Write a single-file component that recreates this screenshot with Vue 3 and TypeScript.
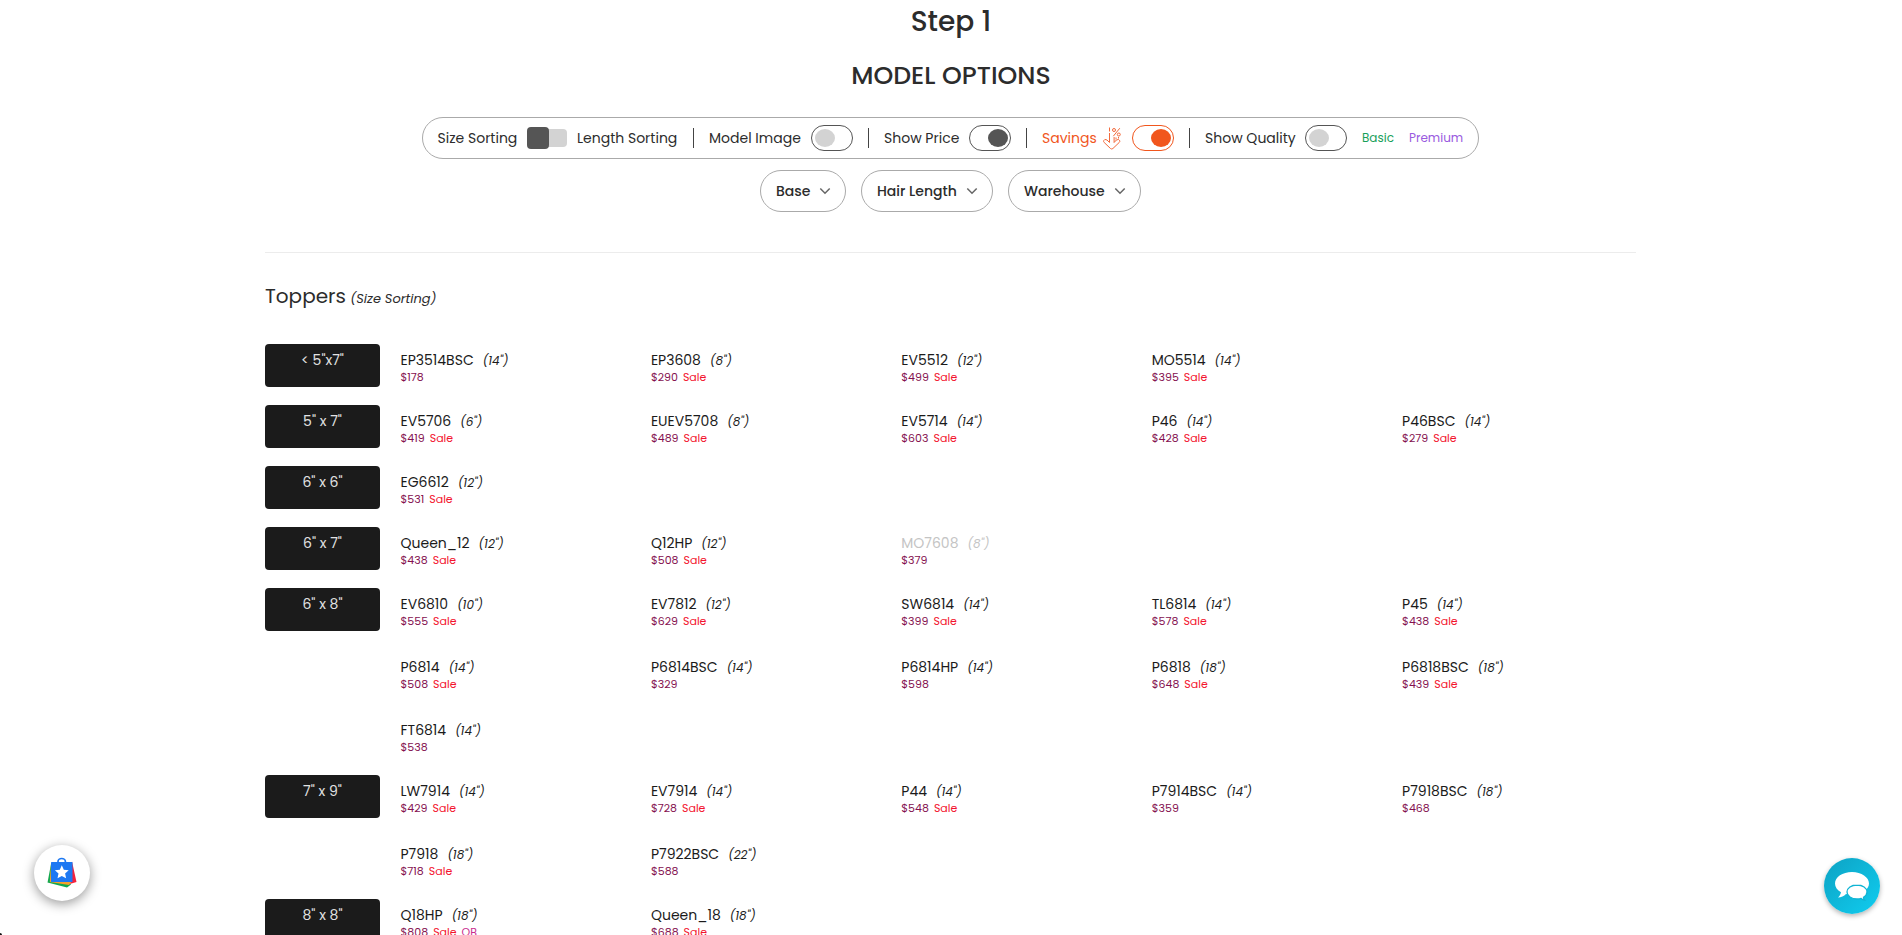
<script setup lang="ts">
interface Model {
  name: string
  length: number
  price: number
  sale?: boolean
  tag?: string
  muted?: boolean
}
interface Group {
  size: string
  models: Model[]
}

const m = (name: string, length: number, price: number, sale = true, extra: Partial<Model> = {}): Model => ({
  name, length, price, sale, ...extra,
})

const groups: Group[] = [
  { size: '< 5"x7"', models: [m('EP3514BSC', 14, 178, false), m('EP3608', 8, 290), m('EV5512', 12, 499), m('MO5514', 14, 395)] },
  { size: '5" x 7"', models: [m('EV5706', 6, 419), m('EUEV5708', 8, 489), m('EV5714', 14, 603), m('P46', 14, 428), m('P46BSC', 14, 279)] },
  { size: '6" x 6"', models: [m('EG6612', 12, 531)] },
  { size: '6" x 7"', models: [m('Queen_12', 12, 438), m('Q12HP', 12, 508), m('MO7608', 8, 379, false, { muted: true })] },
  {
    size: '6" x 8"',
    models: [
      m('EV6810', 10, 555), m('EV7812', 12, 629), m('SW6814', 14, 399), m('TL6814', 14, 578), m('P45', 14, 438),
      m('P6814', 14, 508), m('P6814BSC', 14, 329, false), m('P6814HP', 14, 598, false), m('P6818', 18, 648), m('P6818BSC', 18, 439),
      m('FT6814', 14, 538, false),
    ],
  },
  {
    size: '7" x 9"',
    models: [
      m('LW7914', 14, 429), m('EV7914', 14, 728), m('P44', 14, 548), m('P7914BSC', 14, 359, false), m('P7918BSC', 18, 468, false),
      m('P7918', 18, 718), m('P7922BSC', 22, 588, false),
    ],
  },
  { size: '8" x 8"', models: [m('Q18HP', 18, 808, true, { tag: 'OB' }), m('Queen_18', 18, 688)] },
]

const filters = [
  { label: 'Base', cls: 'base' },
  { label: 'Hair Length', cls: 'hair' },
  { label: 'Warehouse', cls: 'warehouse' },
]
</script>

<template>
  <main class="page">
    <h1 class="step">Step 1</h1>
    <h2 class="title">MODEL OPTIONS</h2>

    <div class="toolbar">
      <span class="label size">Size Sorting</span>
      <span class="slider"><i></i></span>
      <span class="label length">Length Sorting</span>
      <span class="bar"></span>
      <span class="label image">Model Image</span>
      <span class="toggle"><i></i></span>
      <span class="bar"></span>
      <span class="label price-label">Show Price</span>
      <span class="toggle on"><i></i></span>
      <span class="bar"></span>
      <span class="label savings">Savings</span>
      <svg class="drop" width="18" height="23" viewBox="0 0 18 23" fill="none" stroke="#f26a3c" stroke-width="1">
        <path d="M6.500 .5v4M6.500 6v9.500L4 13Q1.500 11.500.6 13.800q-.2.900.6 1.700l6.300 6q1.200 1 2.400 0l6.300-6q.8-.8.6-1.700-.9-2.300-3.400-.8l-2.300 2.500V10" stroke-linejoin="round" />
        <circle cx="11" cy="3" r="1.500" />
        <circle cx="15.800" cy="7.500" r="1.500" />
        <path d="M16.800 1.200l-6.500 8M13 10.500v2M15.500 10v1.500" />
      </svg>
      <span class="toggle on orange"><i></i></span>
      <span class="bar"></span>
      <span class="label quality">Show Quality</span>
      <span class="toggle"><i></i></span>
      <span class="grade basic">Basic</span>
      <span class="grade premium">Premium</span>
    </div>

    <div class="filters">
      <button v-for="f in filters" :key="f.label" class="filter" :class="f.cls">
        <span>{{ f.label }}</span>
        <svg width="12" height="8" viewBox="0 0 12 8" fill="none" stroke="#666" stroke-width="1.500"><path d="M1.300 1.400L6 6.200l4.700-4.800" /></svg>
      </button>
    </div>

    <section class="catalog">
      <h3 class="heading">Toppers <em>(Size Sorting)</em></h3>
      <div v-for="g in groups" :key="g.size" class="group">
        <div class="badge">{{ g.size }}</div>
        <div class="models">
          <div v-for="item in g.models" :key="item.name" class="model">
            <div class="name" :class="{ muted: item.muted }">{{ item.name }}<em>({{ item.length }}")</em></div>
            <div class="cost">${{ item.price }}<span v-if="item.sale" class="sale">Sale</span><span v-if="item.tag" class="tag">{{ item.tag }}</span></div>
          </div>
        </div>
      </div>
    </section>

    <div class="float rewards">
      <svg width="30" height="32" viewBox="0 0 30 32">
        <path d="M4 7L.5 25.500 20 30.500l4-3z" fill="#12a84e" />
        <path d="M25 4.500L29.500 25 21 27.500z" fill="#f5213c" />
        <path d="M4 7L2.800 25 22 28l3-4V7z" fill="#f7a02b" />
        <rect x="4" y="5" width="21.500" height="20" rx=".6" fill="#1d78f2" />
        <path d="M11 6V4.500a3.700 3 0 0 1 7.400 0V6" fill="none" stroke="#1d78f2" stroke-width="1.700" />
        <path d="M14.800 8.300l2 4.400 4.900.5-3.600 3.300 1 4.800-4.300-2.400-4.300 2.400 1-4.800-3.600-3.300 4.900-.5z" fill="#fff" />
      </svg>
    </div>
    <div class="float chat">
      <svg width="36" height="30" viewBox="0 0 36 30">
        <path d="M18 1C8.500 1 1 6.100 1 12.500c0 3.600 2.300 6.700 6 8.800-.4 2-1.500 3.900-3 5.300 3.200-.3 6-1.700 8-3.700 1.900.5 3.900.7 6 .7 9.500 0 17-4.900 17-11.100S27.500 1 18 1z" fill="#fff" />
        <path d="M23 14c-5.600 0-10 3.100-10 7s4.400 7 10 7c1.500 0 3-.2 4.200-.6 1 .9 2 1.400 3.300 1.600-.7-.8-1-1.600-1-2.800 2.200-1.300 3.500-3.200 3.500-5.200 0-3.900-4.400-7-10-7z" fill="#fff" stroke="#10b4d4" stroke-width="1.300" />
      </svg>
    </div>
    <div class="corner"></div>
  </main>
</template>

<style>
html, body { margin: 0; overflow: hidden; background: #fff; }
</style>

<style scoped>
.page {
  position: relative;
  box-sizing: border-box;
  height: 935px;
  overflow: hidden;
  font-family: Poppins, Inter, "Noto Sans", sans-serif;
  font-size: 14px;
  color: #2c2c2c;
  white-space: nowrap;
}
h1, h2, h3 { margin: 0; }
.step { height: 42px; padding-top: 1px; line-height: 42px; text-align: center; font-size: 28px; font-weight: 500; }
.title { height: 40px; margin: 13px 0 21px; line-height: 40px; text-align: center; font-size: 25.200px; font-weight: 500; }
.toolbar {
  display: flex;
  align-items: center;
  box-sizing: border-box;
  width: 1057px;
  height: 42px;
  margin: 0 auto 11px 422px;
  padding-left: 14.500px;
  border: 1px solid #aaa;
  border-radius: 21px;
}
.label { flex: none; line-height: 22px; }
.size { width: 89.500px; }
.length { width: 116px; }
.image { width: 102px; }
.price-label { width: 85px; }
.savings { width: 61px; color: #f1561d; }
.quality { width: 100px; }
.bar { flex: none; width: 1px; height: 20px; margin-right: 15px; background: #444; }
.slider { position: relative; flex: none; width: 40px; height: 18px; margin-right: 10px; border-radius: 4px; background: #d3d3d3; }
.slider i { position: absolute; left: 0; top: -2px; width: 22px; height: 22px; border-radius: 4px; background: #555; }
.toggle {
  display: flex;
  flex: none;
  box-sizing: border-box;
  width: 42px;
  height: 26px;
  margin-right: 15px;
  padding: 3px;
  border: 1px solid #555;
  border-radius: 13px;
}
.toggle i { width: 20px; height: 18px; border-radius: 50%; background: #d3d3d3; }
.toggle.on { justify-content: flex-end; padding-right: 2px; }
.toggle.on i { background: #555; }
.toggle.orange { border-color: #f1561d; }
.toggle.orange i { background: #f1561d; }
.drop { flex: none; margin-right: 11px; }
.grade { flex: none; font-size: 12px; }
.basic { width: 47px; color: #18a05a; }
.premium { color: #9a5be0; }

.filters { display: flex; gap: 15px; margin-left: 760px; }
.filter {
  display: flex;
  align-items: center;
  justify-content: space-between;
  box-sizing: border-box;
  height: 42px;
  padding: 0 14px 0 15px;
  border: 1px solid #aaa;
  border-radius: 21px;
  background: #fff;
  font: inherit;
  font-weight: 500;
  color: #2c2c2c;
}
.base { width: 86px; }
.hair { width: 132px; }
.warehouse { width: 133px; }

.catalog { width: 1371px; margin: 40px 0 0 265px; border-top: 1px solid #ececec; }
.heading { height: 30px; margin: 28px 0 33px; line-height: 30px; font-size: 20px; font-weight: 400; }
.heading em { margin-left: -1px; font-size: 13px; }
.group { display: flex; align-items: flex-start; gap: 20.500px; margin-bottom: 18px; }
.badge { flex: none; box-sizing: border-box; width: 115px; height: 43px; padding-top: 5px; border-radius: 4px; background: #1b1b1b; color: #e2e2e2; line-height: 22px; text-align: center; }
.models { display: grid; grid-template-columns: repeat(5, 250.400px); row-gap: 20px; }
.model { height: 43px; }
.name { height: 20px; padding-top: 5px; line-height: 22px; color: #1b1b1b; }
.name em { margin-left: 9px; font-size: 12px; }
.name.muted { color: #c4c4c4; }
.cost { line-height: 17px; font-size: 11px; color: #84104f; }
.sale { margin-left: 5px; color: #f3152f; }
.tag { margin-left: 5px; color: #c92b8e; }

.float { position: absolute; display: flex; align-items: center; justify-content: center; width: 56px; height: 56px; border-radius: 50%; }
.rewards { left: 34px; top: 845px; background: #fff; box-shadow: 0 3px 12px rgba(0, 0, 0, .4); }
.chat { left: 1824px; top: 858px; background: linear-gradient(135deg, #0da2c3, #10cdf0); box-shadow: 0 2px 5px rgba(0, 0, 0, .3); }
.corner { position: absolute; left: 0; bottom: 0; width: 2px; height: 2px; background: #111; border-radius: 0 2px 0 0; }
</style>
